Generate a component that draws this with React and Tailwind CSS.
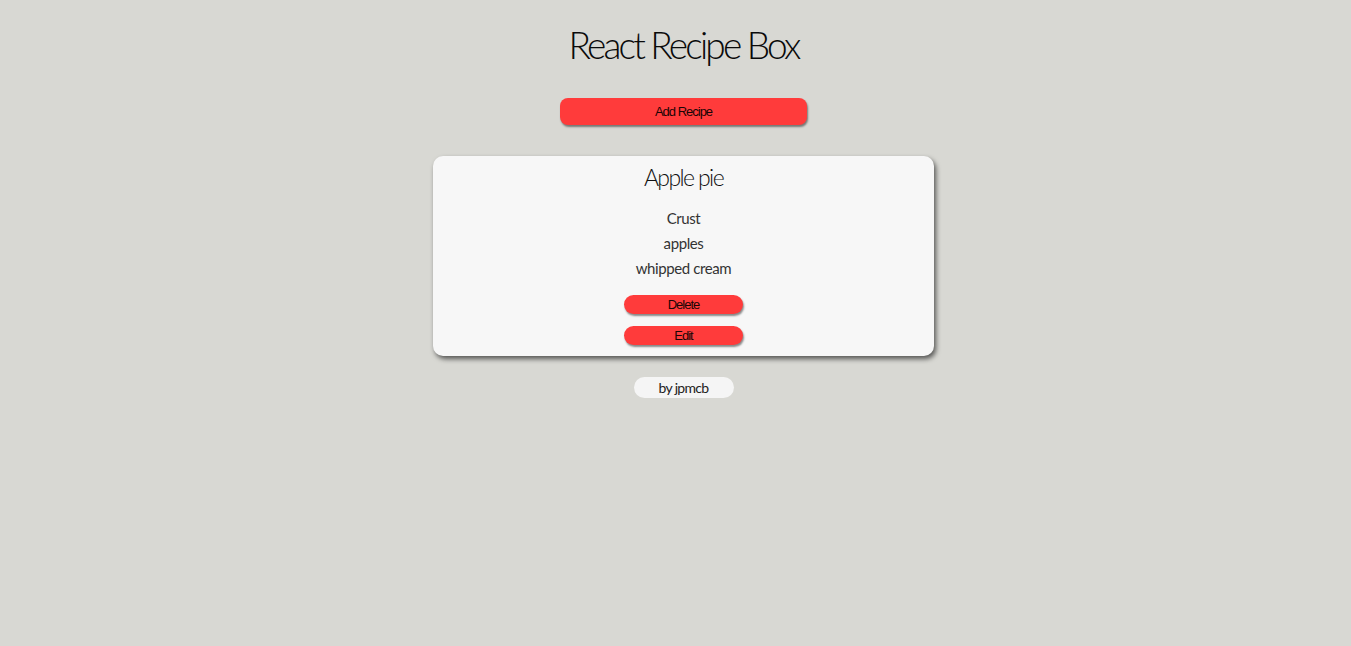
const recipes = [
  { id: 1, title: "Apple pie", ingredients: ["Crust", "apples", "whipped cream"] },
];

function RedButton({ children, className = "" }) {
  return (
    <button
      className={`bg-[#ff3b3b] text-[#1a0505] font-['Liberation_Sans',Arial,sans-serif] tracking-[-1px] shadow-[1px_2px_2px_rgba(0,0,0,0.45)] ${className}`}
    >
      {children}
    </button>
  );
}

export default function App() {
  return (
    <div className="min-h-[646px] bg-[#d8d8d3] font-['Lato',sans-serif] flex flex-col items-center pl-[16px]">
      <h1 className="mt-[24px] text-[37px] leading-[42px] font-light text-[#0a0a0a] tracking-[-2.8px]">React Recipe Box</h1>

      <RedButton className="mt-[32px] w-[247px] h-[27px] rounded-[8px] text-[13px]">Add Recipe</RedButton>

      <div className="mt-[31px] flex flex-col gap-4">
        {recipes.map((recipe) => (
          <div
            key={recipe.id}
            className="w-[501px] bg-[#f7f7f7] rounded-[10px] shadow-[2px_3px_5px_rgba(0,0,0,0.6)] flex flex-col items-center pt-[6px] pb-[11px]"
          >
            <h2 className="text-[23px] leading-[30px] font-light text-[#111] tracking-[-1.6px]">{recipe.title}</h2>
            <div className="mt-[14px] flex flex-col items-center text-[15px] leading-[25px] text-[#333] tracking-[-0.4px]">
              {recipe.ingredients.map((item) => (
                <p key={item}>{item}</p>
              ))}
            </div>
            <RedButton className="mt-[14px] w-[119px] h-[19px] rounded-full text-[13px] leading-[19px]">Delete</RedButton>
            <RedButton className="mt-[12px] w-[119px] h-[19px] rounded-full text-[13px] leading-[19px]">Edit</RedButton>
          </div>
        ))}
      </div>

      <div className="mt-[21px] w-[100px] h-[21px] rounded-full bg-[#f5f5f5] flex items-center justify-center text-[14px] text-[#222] tracking-[-0.7px]">
        by jpmcb
      </div>
    </div>
  );
}
